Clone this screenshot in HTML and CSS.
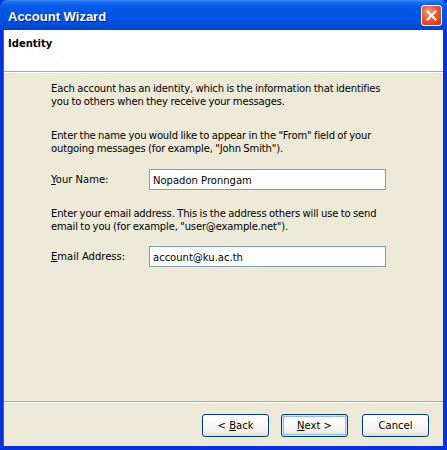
FILE: index.html
```html
<!DOCTYPE html>
<html lang="en">
<head>
  <meta charset="UTF-8">
  <title>Account Wizard</title>
  <link rel="stylesheet" href="styles.css">
</head>
<body>
  <div class="window">
    <div class="titlebar">
      <span class="title">Account Wizard</span>
      <button class="close" aria-label="Close">
        <svg width="11" height="11" viewBox="0 0 11 11">
          <path d="M1.5 1.5 L9.5 9.5 M9.5 1.5 L1.5 9.5" stroke="#fff" stroke-width="2" stroke-linecap="square"/>
        </svg>
      </button>
    </div>

    <div class="client">
      <div class="header">
        <h2>Identity</h2>
      </div>

      <div class="content">
        <p>Each account has an identity, which is the information that identifies<br>
          you to others when they receive your messages.</p>

        <p class="p-name">Enter the name you would like to appear in the "From" field of your<br>
          outgoing messages (for example, "John Smith").</p>

        <div class="field field-name">
          <label for="userName"><u>Y</u>our Name:</label>
          <input type="text" id="userName" value="Nopadon Pronngam">
        </div>

        <p class="p-email">Enter your email address. This is the address others will use to send<br>
          email to you (for example, "user@example.net").</p>

        <div class="field">
          <label for="email"><u>E</u>mail Address:</label>
          <input type="text" id="email" value="account@ku.ac.th">
        </div>
      </div>

      <div class="footer">
        <button class="btn">&lt; <u>B</u>ack</button>
        <button class="btn btn-default"><u>N</u>ext &gt;</button>
        <button class="btn btn-cancel">Cancel</button>
      </div>
    </div>
  </div>
</body>
</html>
```

FILE: styles.css
```css
body {
  margin: 0;
  padding: 0;
  font-family: 'DejaVu Sans', Verdana, sans-serif;
  font-size: 10px;
  color: #000;
  background: #fff;
}

.window {
  width: 447px;
  height: 450px;
  display: flex;
  flex-direction: column;
  box-sizing: border-box;
  background: #0831d9;
}

.titlebar {
  height: 30px;
  flex: none;
  display: flex;
  align-items: center;
  justify-content: space-between;
  padding: 0 5px 0 8px;
  border-radius: 7px 7px 0 0;
  background: linear-gradient(to bottom,
    #3d8ffb 0, #1d6ff2 2px, #0a5ee9 5px, #0056e6 10px,
    #0054e3 18px, #0050dc 24px, #0046cc 28px, #003ec0 30px);
}

.title {
  color: #fff;
  font-family: 'Liberation Sans', Arial, sans-serif;
  font-weight: bold;
  font-size: 13px;
  text-shadow: 1px 1px 0 #0a1f7a;
  margin-top: 2px;
}

.close {
  width: 21px;
  height: 21px;
  padding: 0;
  margin-top: 1px;
  display: flex;
  align-items: center;
  justify-content: center;
  border: 1px solid #fff;
  border-radius: 3px;
  background: radial-gradient(circle at 35% 30%, #f0a08a 0, #e5603d 40%, #d1401f 80%, #c0351a 100%);
}

.client {
  flex: 1;
  display: flex;
  flex-direction: column;
  margin: 0 4px 4px 3px;
  background: #ece9d8;
  border-left: 1px solid #1f5ff0;
}

.header {
  height: 41px;
  flex: none;
  background: #fff;
  border-bottom: 1px solid #aca899;
  box-shadow: 0 1px 0 #fff;
  padding: 0 0 0 4px;
}

.header h2 {
  margin: 7px 0 0;
  font-size: 10px;
  font-weight: bold;
  line-height: 13px;
}

.content {
  flex: 1;
  padding: 10px 20px 0 47px;
}

.content p {
  margin: 0;
  line-height: 13px;
  letter-spacing: -0.15px;
  word-spacing: -0.5px;
}

.p-name {
  margin-top: 21px !important;
}

.p-email {
  margin-top: 17px !important;
}

.field {
  display: flex;
  align-items: center;
  margin-top: 13px;
}

.field-name {
  margin-top: 14px;
}

.field label {
  width: 98px;
}

.field input {
  width: 237px;
  height: 21px;
  box-sizing: border-box;
  border: 1px solid #7f9db9;
  padding: 1px 3px 0;
  font-family: inherit;
  font-size: 10px;
  color: #000;
  outline: none;
}

.footer {
  height: 45px;
  flex: none;
  display: flex;
  justify-content: flex-end;
  align-items: flex-start;
  gap: 12px;
  padding: 12px 14px 0 0;
  box-sizing: border-box;
  border-top: 1px solid #aca899;
  box-shadow: inset 0 1px 0 #fff;
}

.btn {
  width: 67px;
  height: 23px;
  padding: 0;
  font-family: inherit;
  font-size: 10px;
  color: #000;
  border: 1px solid #003c74;
  border-radius: 3px;
  background: linear-gradient(to bottom, #fff 0, #fbfbf9 40%, #f0efe8 80%, #dcd8c8 100%);
}

.btn-default {
  box-shadow: inset 0 0 0 1px #cee7ff, inset 0 0 0 2px #98b8ea;
}

.btn-cancel {
  margin-left: 2px;
}
```
